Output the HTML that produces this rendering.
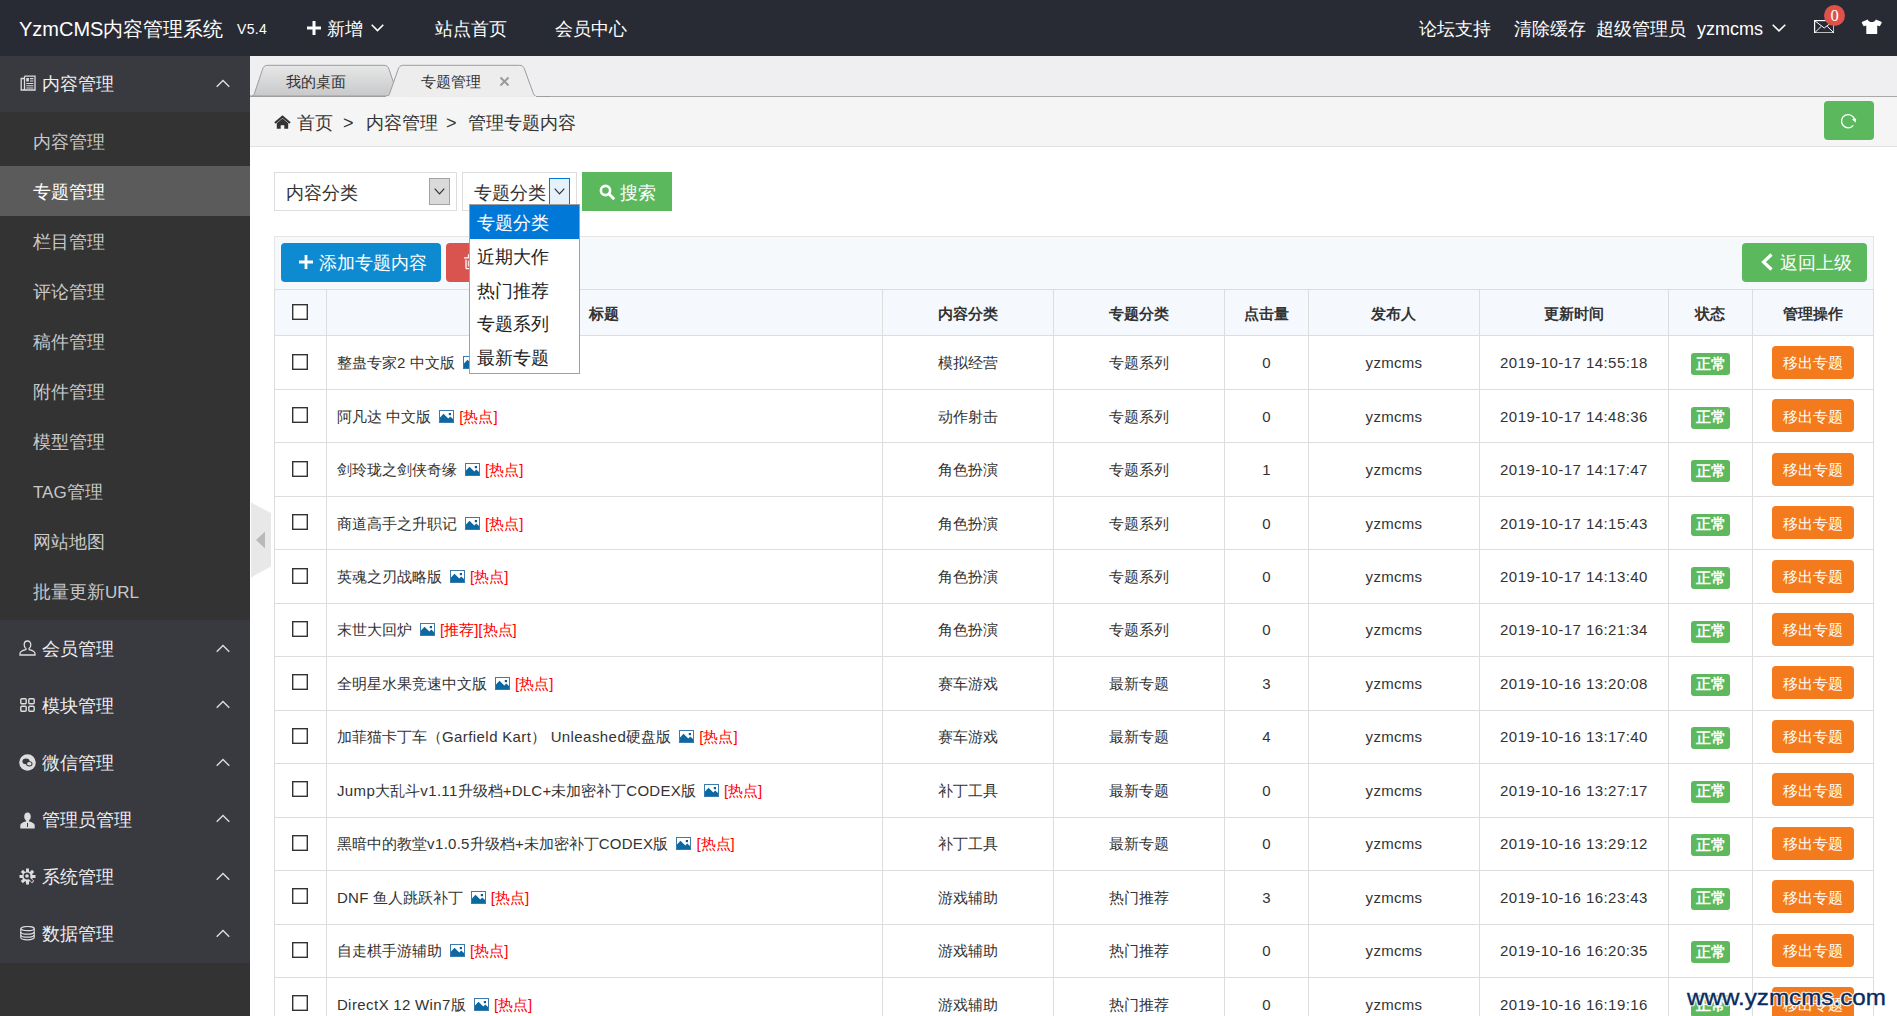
<!DOCTYPE html><html><head><meta charset="utf-8"><style>

*{margin:0;padding:0;box-sizing:border-box}
html,body{width:1897px;height:1016px;overflow:hidden;background:#fff;font-family:"Liberation Sans",sans-serif;color:#333}
.abs{position:absolute}
.t{position:absolute;white-space:nowrap}
.cell{position:absolute;text-align:center;white-space:nowrap}
.vl{position:absolute;width:1px;background:#ddd}
.hl{position:absolute;height:1px;background:#ddd}
.cb{position:absolute;width:16px;height:16px}
.badge{position:absolute;width:39px;height:22px;background:#5eb95e;border-radius:3px}
.obtn{position:absolute;width:82px;height:33px;background:#f37b1d;border-radius:4px}
.red{color:#f00}

</style></head><body>
<div class="abs" style="left:0;top:0;width:1897px;height:56px;background:#292b34"></div>
<div class="t" style="left:19px;top:9.00px;line-height:40px;font-size:20px;color:#fff;">YzmCMS内容管理系统</div>
<div class="t" style="left:237px;top:9.10px;line-height:40px;font-size:14px;color:#fff;letter-spacing:0.3px">V5.4</div>
<svg class="abs" style="left:307px;top:21px" width="14" height="14" viewBox="0 0 14 14"><path d="M5.5 0h3v5.5H14v3H8.5V14h-3V8.5H0v-3h5.5z" fill="#fff"/></svg>
<div class="t" style="left:327px;top:9.00px;line-height:40px;font-size:18px;color:#fff;">新增</div>
<svg class="abs" style="left:371px;top:24px" width="13" height="8" viewBox="0 0 13 8"><path d="M0.7 0.7L6.5 6.5L12.3 0.7" stroke="#fff" stroke-width="1.6" fill="none"/></svg>
<div class="t" style="left:435px;top:9.00px;line-height:40px;font-size:18px;color:#fff;">站点首页</div>
<div class="t" style="left:555px;top:9.00px;line-height:40px;font-size:18px;color:#fff;">会员中心</div>
<div class="t" style="left:1419px;top:9.00px;line-height:40px;font-size:18px;color:#fff;">论坛支持</div>
<div class="t" style="left:1514px;top:9.00px;line-height:40px;font-size:18px;color:#fff;">清除缓存</div>
<div class="t" style="left:1596px;top:9.00px;line-height:40px;font-size:18px;color:#fff;">超级管理员</div>
<div class="t" style="left:1697px;top:8.80px;line-height:40px;font-size:18px;color:#fff;">yzmcms</div>
<svg class="abs" style="left:1772px;top:24px" width="14" height="8" viewBox="0 0 14 8"><path d="M0.7 0.7L7 6.8L13.3 0.7" stroke="#fff" stroke-width="1.6" fill="none"/></svg>
<svg class="abs" style="left:1813.5px;top:19.5px" width="20.5" height="13.5" viewBox="0 0 20.5 13.5"><rect x="0.6" y="0.6" width="19.3" height="12.3" stroke="#fff" stroke-width="1.2" fill="none"/><path d="M0.8 0.8L10.25 8L19.7 0.8M0.8 12.7L7.2 6.4M19.7 12.7L13.3 6.4" stroke="#fff" stroke-width="1" fill="none"/></svg>
<div class="abs" style="left:1824px;top:4.5px;width:21px;height:21px;border-radius:50%;background:#df524a;color:#fff;font-family:'Liberation Serif',serif;font-size:16.5px;text-align:center;line-height:22px">0</div>
<svg class="abs" style="left:1861px;top:18.5px" width="21.5" height="15.5" viewBox="0 0 23 17"><path d="M7 0.5L1.2 3C0.6 3.3 0.4 3.9 0.7 4.5L2.3 7.3C2.6 7.8 3.1 8 3.6 7.8L5.5 7.1V15.8C5.5 16.3 5.9 16.6 6.4 16.6H16.6C17.1 16.6 17.5 16.3 17.5 15.8V7.1L19.4 7.8C19.9 8 20.4 7.8 20.7 7.3L22.3 4.5C22.6 3.9 22.4 3.3 21.8 3L16 0.5C15 2.5 13.5 3.4 11.5 3.4S8 2.5 7 0.5Z" fill="#fff"/></svg>
<div class="abs" style="left:0;top:56px;width:250px;height:960px;background:#333"></div>
<div class="abs" style="left:0;top:56px;width:250px;height:56px;background:#393940"></div>
<div class="t" style="left:42px;top:64.00px;line-height:40px;font-size:18px;color:#eee;">内容管理</div>
<svg class="abs" style="left:20px;top:75px" width="16" height="16" viewBox="0 0 16 16"><path d="M4.5 1.2H15V15H1.2V3.5H4.5" stroke="#ddd" stroke-width="1.3" fill="none"/><path d="M4.5 1.2V15" stroke="#ddd" stroke-width="1.3"/><rect x="6.3" y="3" width="2.6" height="3.5" fill="#ddd"/><path d="M10 3.6h3.4M10 6h3.4M6.3 8.5h7.1M6.3 10.8h7.1M6.3 13h7.1" stroke="#ddd" stroke-width="1.1"/></svg>
<svg class="abs" style="left:215.5px;top:79px" width="14" height="9" viewBox="0 0 14 9"><path d="M0.7 7.8L7 1.5L13.3 7.8" stroke="#ddd" stroke-width="1.4" fill="none"/></svg>
<div class="abs" style="left:0;top:620px;width:250px;height:57px;background:#393940"></div>
<div class="t" style="left:42px;top:628.50px;line-height:40px;font-size:18px;color:#eee;">会员管理</div>
<svg class="abs" style="left:19px;top:640px" width="17" height="16" viewBox="0 0 17 16"><path d="M8.5 1C6.3 1 5.2 2.7 5.2 4.8C5.2 6.5 6 8 7 8.7L6.8 9.6C4 10.3 1 11.8 1 13.5V15H16V13.5C16 11.8 13 10.3 10.2 9.6L10 8.7C11 8 11.8 6.5 11.8 4.8C11.8 2.7 10.7 1 8.5 1Z" stroke="#ddd" stroke-width="1.3" fill="none"/></svg>
<svg class="abs" style="left:215.5px;top:644px" width="14" height="9" viewBox="0 0 14 9"><path d="M0.7 7.8L7 1.5L13.3 7.8" stroke="#ddd" stroke-width="1.4" fill="none"/></svg>
<div class="abs" style="left:0;top:677px;width:250px;height:57px;background:#393940"></div>
<div class="t" style="left:42px;top:685.50px;line-height:40px;font-size:18px;color:#eee;">模块管理</div>
<svg class="abs" style="left:20px;top:698px" width="15" height="14" viewBox="0 0 15 14"><rect x="0.8" y="0.8" width="5.4" height="5" rx="1" stroke="#ddd" stroke-width="1.4" fill="none"/><rect x="8.8" y="0.8" width="5.4" height="5" rx="1" stroke="#ddd" stroke-width="1.4" fill="none"/><rect x="0.8" y="8.2" width="5.4" height="5" rx="1" stroke="#ddd" stroke-width="1.4" fill="none"/><rect x="8.8" y="8.2" width="5.4" height="5" rx="1" stroke="#ddd" stroke-width="1.4" fill="none"/></svg>
<svg class="abs" style="left:215.5px;top:700px" width="14" height="9" viewBox="0 0 14 9"><path d="M0.7 7.8L7 1.5L13.3 7.8" stroke="#ddd" stroke-width="1.4" fill="none"/></svg>
<div class="abs" style="left:0;top:734px;width:250px;height:57px;background:#393940"></div>
<div class="t" style="left:42px;top:742.50px;line-height:40px;font-size:18px;color:#eee;">微信管理</div>
<svg class="abs" style="left:19px;top:754px" width="17" height="17" viewBox="0 0 17 17"><circle cx="8.5" cy="8.5" r="8.3" fill="#ddd"/><ellipse cx="7" cy="7.3" rx="3.6" ry="2.9" fill="#393940"/><ellipse cx="10.3" cy="9.8" rx="3.2" ry="2.6" fill="#393940"/><ellipse cx="10.3" cy="9.8" rx="2.3" ry="1.7" fill="#ddd"/></svg>
<svg class="abs" style="left:215.5px;top:758px" width="14" height="9" viewBox="0 0 14 9"><path d="M0.7 7.8L7 1.5L13.3 7.8" stroke="#ddd" stroke-width="1.4" fill="none"/></svg>
<div class="abs" style="left:0;top:791px;width:250px;height:57px;background:#393940"></div>
<div class="t" style="left:42px;top:799.50px;line-height:40px;font-size:18px;color:#eee;">管理员管理</div>
<svg class="abs" style="left:20px;top:812px" width="15" height="17" viewBox="0 0 15 17"><path d="M7.5 0.5C5.3 0.5 4.2 2.3 4.2 4.6C4.2 6.4 5 7.9 6 8.6L5.8 9.6C3 10.3 0.3 11.5 0.3 13.3V16.5H14.7V13.3C14.7 11.5 12 10.3 9.2 9.6L9 8.6C10 7.9 10.8 6.4 10.8 4.6C10.8 2.3 9.7 0.5 7.5 0.5Z" fill="#ddd"/><path d="M7.5 11v4" stroke="#393940" stroke-width="1"/></svg>
<svg class="abs" style="left:215.5px;top:814px" width="14" height="9" viewBox="0 0 14 9"><path d="M0.7 7.8L7 1.5L13.3 7.8" stroke="#ddd" stroke-width="1.4" fill="none"/></svg>
<div class="abs" style="left:0;top:848px;width:250px;height:57px;background:#393940"></div>
<div class="t" style="left:42px;top:856.50px;line-height:40px;font-size:18px;color:#eee;">系统管理</div>
<svg class="abs" style="left:19px;top:868px" width="17" height="17" viewBox="0 0 17 17"><g fill="#ddd"><circle cx="8.5" cy="8.5" r="5.3"/><rect x="7" y="0.5" width="3" height="16"/><rect x="0.5" y="7" width="16" height="3"/><rect x="7" y="0.5" width="3" height="16" transform="rotate(45 8.5 8.5)"/><rect x="7" y="0.5" width="3" height="16" transform="rotate(-45 8.5 8.5)"/></g><circle cx="8" cy="8" r="2.6" fill="none" stroke="#393940" stroke-width="1.6"/><path d="M10 10l3.5 3.5" stroke="#393940" stroke-width="1.8"/></svg>
<svg class="abs" style="left:215.5px;top:872px" width="14" height="9" viewBox="0 0 14 9"><path d="M0.7 7.8L7 1.5L13.3 7.8" stroke="#ddd" stroke-width="1.4" fill="none"/></svg>
<div class="abs" style="left:0;top:905px;width:250px;height:58px;background:#393940"></div>
<div class="t" style="left:42px;top:914.00px;line-height:40px;font-size:18px;color:#eee;">数据管理</div>
<svg class="abs" style="left:20px;top:926px" width="15" height="14.5" viewBox="0 0 15 14.5"><g stroke="#ddd" stroke-width="1.2" fill="none"><ellipse cx="7.5" cy="2.6" rx="6.7" ry="2.1"/><path d="M0.8 2.6V11.6C0.8 12.8 3.8 13.8 7.5 13.8S14.2 12.8 14.2 11.6V2.6"/><path d="M0.8 5.9C0.8 7.1 3.8 8.1 7.5 8.1S14.2 7.1 14.2 5.9M0.8 8.9C0.8 10.1 3.8 11.1 7.5 11.1S14.2 10.1 14.2 8.9"/></g></svg>
<svg class="abs" style="left:215.5px;top:929px" width="14" height="9" viewBox="0 0 14 9"><path d="M0.7 7.8L7 1.5L13.3 7.8" stroke="#ddd" stroke-width="1.4" fill="none"/></svg>
<div class="abs" style="left:0;top:166px;width:250px;height:50px;background:#5b5b5b"></div>
<div class="t" style="left:33px;top:121.50px;line-height:40px;font-size:18px;color:#c8c8c8;">内容管理</div>
<div class="t" style="left:33px;top:171.50px;line-height:40px;font-size:18px;color:#fff;">专题管理</div>
<div class="t" style="left:33px;top:221.50px;line-height:40px;font-size:18px;color:#c8c8c8;">栏目管理</div>
<div class="t" style="left:33px;top:271.50px;line-height:40px;font-size:18px;color:#c8c8c8;">评论管理</div>
<div class="t" style="left:33px;top:321.50px;line-height:40px;font-size:18px;color:#c8c8c8;">稿件管理</div>
<div class="t" style="left:33px;top:371.50px;line-height:40px;font-size:18px;color:#c8c8c8;">附件管理</div>
<div class="t" style="left:33px;top:421.50px;line-height:40px;font-size:18px;color:#c8c8c8;">模型管理</div>
<div class="t" style="left:33px;top:471.50px;line-height:40px;font-size:18px;color:#c8c8c8;"><span style="font-size:17px">TAG</span>管理</div>
<div class="t" style="left:33px;top:521.50px;line-height:40px;font-size:18px;color:#c8c8c8;">网站地图</div>
<div class="t" style="left:33px;top:571.50px;line-height:40px;font-size:18px;color:#c8c8c8;">批量更新<span style="font-size:17px">URL</span></div>
<svg class="abs" style="left:251px;top:502px" width="21" height="76" viewBox="0 0 21 76"><path d="M0 0.5L20 11V64.5L0 75.5Z" fill="#e8e8e8"/><path d="M5 38L14 29.5V46.5Z" fill="#b9b9b9"/></svg>
<div class="abs" style="left:250px;top:56px;width:1647px;height:41px;background:#efeff1;border-bottom:1px solid #a9a9a9"></div>
<svg class="abs" style="left:250px;top:56px" width="300" height="42" viewBox="0 0 300 42">
<defs><linearGradient id="g1" x1="0" y1="0" x2="0" y2="1"><stop offset="0" stop-color="#e6e7e7"/><stop offset="1" stop-color="#c8c8ca"/></linearGradient></defs>
<path d="M0 40.5C2.5 40.5 3.6 39.6 4.4 37.5L12.6 13.2C13.4 10.6 14.9 9.3 17.6 9.3H134C136.7 9.3 138.2 10.6 139 13.2L147.2 37.5C148 39.6 149 40.5 151.5 40.5Z" fill="url(#g1)" stroke="#9c9c9c" stroke-width="1"/>
<path d="M0 40.5H140" stroke="#9f9f9f" stroke-width="2"/>
<path d="M134.5 41C137.5 41 138.8 39.8 139.6 37.6L148.2 13.2C149 10.6 150.5 9.3 153.2 9.3H269.5C272.2 9.3 273.7 10.6 274.5 13.2L283.4 37.6C284.3 39.8 285.5 40.6 288 40.6H300" fill="#ededed" stroke="#9c9c9c" stroke-width="1"/>
<rect x="136" y="40.1" width="150" height="1.9" fill="#ededed"/>
</svg>
<div class="t" style="left:286px;top:61.90px;line-height:40px;font-size:15px;color:#333;">我的桌面</div>
<div class="t" style="left:421px;top:61.90px;line-height:40px;font-size:15px;color:#333;">专题管理</div>
<svg class="abs" style="left:499px;top:76px" width="11" height="11" viewBox="0 0 11 11"><path d="M1.5 1.5L9.5 9.5M9.5 1.5L1.5 9.5" stroke="#9a9a9a" stroke-width="2"/></svg>
<div class="abs" style="left:250px;top:97px;width:1647px;height:50px;background:#f5f5f5;border-bottom:1px solid #e2e2e2"></div>
<svg class="abs" style="left:274px;top:115px" width="17" height="14" viewBox="0 0 17 14"><path d="M8.5 0.3L0.3 7.2L1.7 8.8L8.5 3L15.3 8.8L16.7 7.2Z" fill="#333"/><path d="M2.8 8.3L8.5 3.6L14.2 8.3V13.8H10.3V10.2H6.7V13.8H2.8Z" fill="#333"/></svg>
<div class="t" style="left:297px;top:102.50px;line-height:40px;font-size:18px;color:#333;">首页</div>
<div class="t" style="left:343px;top:102.50px;line-height:40px;font-size:18px;color:#333;">&gt;</div>
<div class="t" style="left:366px;top:102.50px;line-height:40px;font-size:18px;color:#333;">内容管理</div>
<div class="t" style="left:446px;top:102.50px;line-height:40px;font-size:18px;color:#333;">&gt;</div>
<div class="t" style="left:468px;top:102.50px;line-height:40px;font-size:18px;color:#333;">管理专题内容</div>
<div class="abs" style="left:1824px;top:101px;width:50px;height:39px;background:#5cb85c;border-radius:4px"></div>
<svg class="abs" style="left:1840px;top:113px" width="18" height="17" viewBox="0 0 18 17"><path d="M13.3 12.3A6.6 6.6 0 1 1 14.6 6.8" stroke="#fff" stroke-width="1.3" fill="none"/><path d="M12 6.2L16.2 5.6L15.6 9.8Z" fill="#fff"/></svg>
<div class="abs" style="left:274px;top:172px;width:183px;height:39px;border:1px solid #ddd;background:#fff"></div>
<div class="t" style="left:286px;top:173.00px;line-height:40px;font-size:18px;color:#333;">内容分类</div>
<div class="abs" style="left:429px;top:178px;width:21px;height:27px;border:1px solid #a3a3a3;background:#dadada"></div>
<svg class="abs" style="left:434px;top:188px" width="11" height="7" viewBox="0 0 11 7"><path d="M0.7 0.7L5.5 5.8L10.3 0.7" stroke="#333" stroke-width="1.2" fill="none"/></svg>
<div class="abs" style="left:462px;top:172px;width:115px;height:39px;border:1px solid #ddd;background:#fff"></div>
<div class="t" style="left:474px;top:173.00px;line-height:40px;font-size:18px;color:#333;">专题分类</div>
<div class="abs" style="left:549px;top:178px;width:21px;height:27px;border:1px solid #0078d7;background:#e5f1fb"></div>
<svg class="abs" style="left:554px;top:188px" width="11" height="7" viewBox="0 0 11 7"><path d="M0.7 0.7L5.5 5.8L10.3 0.7" stroke="#333" stroke-width="1.2" fill="none"/></svg>
<div class="abs" style="left:582px;top:172px;width:90px;height:39px;background:#5cb85c"></div>
<svg class="abs" style="left:599px;top:184px" width="16" height="16" viewBox="0 0 16 16"><circle cx="6.5" cy="6.5" r="4.6" stroke="#fff" stroke-width="2.6" fill="none"/><path d="M10 10L14.3 14.3" stroke="#fff" stroke-width="3" stroke-linecap="round"/></svg>
<div class="t" style="left:620px;top:173.00px;line-height:40px;font-size:18px;color:#fff;">搜索</div>
<div class="abs" style="left:274px;top:236px;width:1600px;height:54px;background:#f5f9fc;border:1px solid #e6e6e6;border-bottom:none"></div>
<div class="abs" style="left:281px;top:243px;width:160px;height:39px;background:#0e8bd0;border-radius:4px"></div>
<svg class="abs" style="left:299px;top:255px" width="14" height="14" viewBox="0 0 14 14"><path d="M5.6 0h2.8v5.6H14v2.8H8.4V14H5.6V8.4H0V5.6h5.6z" fill="#fff"/></svg>
<div class="t" style="left:319px;top:242.50px;line-height:40px;font-size:18px;color:#fff;">添加专题内容</div>
<div class="abs" style="left:446px;top:243px;width:110px;height:39px;background:#d9534f;border-radius:4px"></div>
<svg class="abs" style="left:463px;top:253px" width="12" height="17" viewBox="0 0 12 17"><path d="M1 4.8H12M5.5 4.8V2H9V4.8" stroke="#fff" stroke-width="1.3" fill="none"/><path d="M3 6.5V14.5C3 15.2 3.5 15.7 4.2 15.7H10" stroke="#fff" stroke-width="1.3" fill="none"/><path d="M5.3 7.5V13.5" stroke="#fff" stroke-width="1"/></svg>
<div class="abs" style="left:1742px;top:243px;width:125px;height:39px;background:#5cb85c;border-radius:4px"></div>
<svg class="abs" style="left:1760px;top:253px" width="14" height="18" viewBox="0 0 14 18"><path d="M11.5 1.5L3.5 9L11.5 16.5" stroke="#fff" stroke-width="3.2" fill="none"/></svg>
<div class="t" style="left:1780px;top:242.50px;line-height:40px;font-size:18px;color:#fff;">返回上级</div>
<div class="abs" style="left:274px;top:289px;width:1600px;height:47px;background:#f5f9fd"></div>
<div class="hl" style="left:274px;top:289px;width:1600px"></div>
<div class="hl" style="left:274px;top:335px;width:1600px"></div>
<div class="hl" style="left:274px;top:389px;width:1600px"></div>
<div class="hl" style="left:274px;top:442px;width:1600px"></div>
<div class="hl" style="left:274px;top:496px;width:1600px"></div>
<div class="hl" style="left:274px;top:549px;width:1600px"></div>
<div class="hl" style="left:274px;top:603px;width:1600px"></div>
<div class="hl" style="left:274px;top:656px;width:1600px"></div>
<div class="hl" style="left:274px;top:710px;width:1600px"></div>
<div class="hl" style="left:274px;top:763px;width:1600px"></div>
<div class="hl" style="left:274px;top:817px;width:1600px"></div>
<div class="hl" style="left:274px;top:870px;width:1600px"></div>
<div class="hl" style="left:274px;top:924px;width:1600px"></div>
<div class="hl" style="left:274px;top:977px;width:1600px"></div>
<div class="hl" style="left:274px;top:1030px;width:1600px"></div>
<div class="vl" style="left:274px;top:289px;height:740px"></div>
<div class="vl" style="left:326px;top:289px;height:740px"></div>
<div class="vl" style="left:882px;top:289px;height:740px"></div>
<div class="vl" style="left:1053px;top:289px;height:740px"></div>
<div class="vl" style="left:1224px;top:289px;height:740px"></div>
<div class="vl" style="left:1308px;top:289px;height:740px"></div>
<div class="vl" style="left:1479px;top:289px;height:740px"></div>
<div class="vl" style="left:1668px;top:289px;height:740px"></div>
<div class="vl" style="left:1752px;top:289px;height:740px"></div>
<div class="vl" style="left:1873px;top:289px;height:740px"></div>
<svg class="cb" style="left:292px;top:304px" width="16" height="16" viewBox="0 0 16 16"><rect x="0.7" y="0.7" width="14.6" height="14.6" fill="#fff" stroke="#333" stroke-width="1.4"/></svg>
<div class="cell" style="left:326.4px;width:555.90px;top:293.90px;line-height:40px;font-size:15px;color:#333;font-weight:bold">标题</div>
<div class="cell" style="left:882.3px;width:171.00px;top:293.90px;line-height:40px;font-size:15px;color:#333;font-weight:bold">内容分类</div>
<div class="cell" style="left:1053.3px;width:170.90px;top:293.90px;line-height:40px;font-size:15px;color:#333;font-weight:bold">专题分类</div>
<div class="cell" style="left:1224.2px;width:84.40px;top:293.90px;line-height:40px;font-size:15px;color:#333;font-weight:bold">点击量</div>
<div class="cell" style="left:1308.6px;width:170.80px;top:293.90px;line-height:40px;font-size:15px;color:#333;font-weight:bold">发布人</div>
<div class="cell" style="left:1479.4px;width:189.20px;top:293.90px;line-height:40px;font-size:15px;color:#333;font-weight:bold">更新时间</div>
<div class="cell" style="left:1668.6px;width:83.80px;top:293.90px;line-height:40px;font-size:15px;color:#333;font-weight:bold">状态</div>
<div class="cell" style="left:1752.4px;width:120.60px;top:293.90px;line-height:40px;font-size:15px;color:#333;font-weight:bold">管理操作</div>
<svg class="cb" style="left:292px;top:354px" width="16" height="16" viewBox="0 0 16 16"><rect x="0.7" y="0.7" width="14.6" height="14.6" fill="#fff" stroke="#333" stroke-width="1.4"/></svg>
<div class="t" style="left:337px;top:343.23px;line-height:40px;font-size:15px;color:#333;">整蛊专家<span style="letter-spacing:0.45px">2</span><span style="letter-spacing:0.1px"> </span>中文版<svg width="15" height="13" viewBox="0 0 15 13" style="vertical-align:-1px;margin:0 5px 0 8px"><rect x="0.5" y="0.5" width="14" height="12" fill="#fff" stroke="#3c7bab" stroke-width="1"/><path d="M1 7.5L4.5 3.8L9.3 8.6L11.2 6.6L14 9V12H1Z" fill="#0b69a1"/><rect x="9.8" y="3" width="2.2" height="2.2" fill="#0b5a95"/></svg><span class="red">[热点]</span></div>
<div class="cell" style="left:882.3px;width:171.00px;top:343.23px;line-height:40px;font-size:15px;color:#333;">模拟经营</div>
<div class="cell" style="left:1053.3px;width:170.90px;top:343.23px;line-height:40px;font-size:15px;color:#333;">专题系列</div>
<div class="cell" style="left:1224.2px;width:84.40px;top:343.23px;line-height:40px;font-size:15px;color:#333;">0</div>
<div class="cell" style="left:1308.6px;width:170.80px;top:343.23px;line-height:40px;font-size:15px;color:#333;letter-spacing:0.3px">yzmcms</div>
<div class="cell" style="left:1479.4px;width:189.20px;top:343.23px;line-height:40px;font-size:15px;color:#333;letter-spacing:0.45px">2019-10-17 14:55:18</div>
<div class="badge" style="left:1691px;top:353.2px"></div>
<div class="cell" style="left:1691px;width:39.00px;top:343.73px;line-height:40px;font-size:15px;color:#fff;font-weight:bold">正常</div>
<div class="obtn" style="left:1772px;top:345.7px"></div>
<div class="cell" style="left:1772px;width:82.00px;top:343.23px;line-height:40px;font-size:15px;color:#fff;">移出专题</div>
<svg class="cb" style="left:292px;top:407px" width="16" height="16" viewBox="0 0 16 16"><rect x="0.7" y="0.7" width="14.6" height="14.6" fill="#fff" stroke="#333" stroke-width="1.4"/></svg>
<div class="t" style="left:337px;top:396.68px;line-height:40px;font-size:15px;color:#333;">阿凡达<span style="letter-spacing:0.1px"> </span>中文版<svg width="15" height="13" viewBox="0 0 15 13" style="vertical-align:-1px;margin:0 5px 0 8px"><rect x="0.5" y="0.5" width="14" height="12" fill="#fff" stroke="#3c7bab" stroke-width="1"/><path d="M1 7.5L4.5 3.8L9.3 8.6L11.2 6.6L14 9V12H1Z" fill="#0b69a1"/><rect x="9.8" y="3" width="2.2" height="2.2" fill="#0b5a95"/></svg><span class="red">[热点]</span></div>
<div class="cell" style="left:882.3px;width:171.00px;top:396.68px;line-height:40px;font-size:15px;color:#333;">动作射击</div>
<div class="cell" style="left:1053.3px;width:170.90px;top:396.68px;line-height:40px;font-size:15px;color:#333;">专题系列</div>
<div class="cell" style="left:1224.2px;width:84.40px;top:396.68px;line-height:40px;font-size:15px;color:#333;">0</div>
<div class="cell" style="left:1308.6px;width:170.80px;top:396.68px;line-height:40px;font-size:15px;color:#333;letter-spacing:0.3px">yzmcms</div>
<div class="cell" style="left:1479.4px;width:189.20px;top:396.68px;line-height:40px;font-size:15px;color:#333;letter-spacing:0.45px">2019-10-17 14:48:36</div>
<div class="badge" style="left:1691px;top:406.7px"></div>
<div class="cell" style="left:1691px;width:39.00px;top:397.18px;line-height:40px;font-size:15px;color:#fff;font-weight:bold">正常</div>
<div class="obtn" style="left:1772px;top:399.2px"></div>
<div class="cell" style="left:1772px;width:82.00px;top:396.68px;line-height:40px;font-size:15px;color:#fff;">移出专题</div>
<svg class="cb" style="left:292px;top:461px" width="16" height="16" viewBox="0 0 16 16"><rect x="0.7" y="0.7" width="14.6" height="14.6" fill="#fff" stroke="#333" stroke-width="1.4"/></svg>
<div class="t" style="left:337px;top:450.12px;line-height:40px;font-size:15px;color:#333;">剑玲珑之剑侠奇缘<svg width="15" height="13" viewBox="0 0 15 13" style="vertical-align:-1px;margin:0 5px 0 8px"><rect x="0.5" y="0.5" width="14" height="12" fill="#fff" stroke="#3c7bab" stroke-width="1"/><path d="M1 7.5L4.5 3.8L9.3 8.6L11.2 6.6L14 9V12H1Z" fill="#0b69a1"/><rect x="9.8" y="3" width="2.2" height="2.2" fill="#0b5a95"/></svg><span class="red">[热点]</span></div>
<div class="cell" style="left:882.3px;width:171.00px;top:450.12px;line-height:40px;font-size:15px;color:#333;">角色扮演</div>
<div class="cell" style="left:1053.3px;width:170.90px;top:450.12px;line-height:40px;font-size:15px;color:#333;">专题系列</div>
<div class="cell" style="left:1224.2px;width:84.40px;top:450.12px;line-height:40px;font-size:15px;color:#333;">1</div>
<div class="cell" style="left:1308.6px;width:170.80px;top:450.12px;line-height:40px;font-size:15px;color:#333;letter-spacing:0.3px">yzmcms</div>
<div class="cell" style="left:1479.4px;width:189.20px;top:450.12px;line-height:40px;font-size:15px;color:#333;letter-spacing:0.45px">2019-10-17 14:17:47</div>
<div class="badge" style="left:1691px;top:460.1px"></div>
<div class="cell" style="left:1691px;width:39.00px;top:450.62px;line-height:40px;font-size:15px;color:#fff;font-weight:bold">正常</div>
<div class="obtn" style="left:1772px;top:452.6px"></div>
<div class="cell" style="left:1772px;width:82.00px;top:450.12px;line-height:40px;font-size:15px;color:#fff;">移出专题</div>
<svg class="cb" style="left:292px;top:514px" width="16" height="16" viewBox="0 0 16 16"><rect x="0.7" y="0.7" width="14.6" height="14.6" fill="#fff" stroke="#333" stroke-width="1.4"/></svg>
<div class="t" style="left:337px;top:503.58px;line-height:40px;font-size:15px;color:#333;">商道高手之升职记<svg width="15" height="13" viewBox="0 0 15 13" style="vertical-align:-1px;margin:0 5px 0 8px"><rect x="0.5" y="0.5" width="14" height="12" fill="#fff" stroke="#3c7bab" stroke-width="1"/><path d="M1 7.5L4.5 3.8L9.3 8.6L11.2 6.6L14 9V12H1Z" fill="#0b69a1"/><rect x="9.8" y="3" width="2.2" height="2.2" fill="#0b5a95"/></svg><span class="red">[热点]</span></div>
<div class="cell" style="left:882.3px;width:171.00px;top:503.58px;line-height:40px;font-size:15px;color:#333;">角色扮演</div>
<div class="cell" style="left:1053.3px;width:170.90px;top:503.58px;line-height:40px;font-size:15px;color:#333;">专题系列</div>
<div class="cell" style="left:1224.2px;width:84.40px;top:503.58px;line-height:40px;font-size:15px;color:#333;">0</div>
<div class="cell" style="left:1308.6px;width:170.80px;top:503.58px;line-height:40px;font-size:15px;color:#333;letter-spacing:0.3px">yzmcms</div>
<div class="cell" style="left:1479.4px;width:189.20px;top:503.58px;line-height:40px;font-size:15px;color:#333;letter-spacing:0.45px">2019-10-17 14:15:43</div>
<div class="badge" style="left:1691px;top:513.6px"></div>
<div class="cell" style="left:1691px;width:39.00px;top:504.08px;line-height:40px;font-size:15px;color:#fff;font-weight:bold">正常</div>
<div class="obtn" style="left:1772px;top:506.1px"></div>
<div class="cell" style="left:1772px;width:82.00px;top:503.58px;line-height:40px;font-size:15px;color:#fff;">移出专题</div>
<svg class="cb" style="left:292px;top:568px" width="16" height="16" viewBox="0 0 16 16"><rect x="0.7" y="0.7" width="14.6" height="14.6" fill="#fff" stroke="#333" stroke-width="1.4"/></svg>
<div class="t" style="left:337px;top:557.02px;line-height:40px;font-size:15px;color:#333;">英魂之刃战略版<svg width="15" height="13" viewBox="0 0 15 13" style="vertical-align:-1px;margin:0 5px 0 8px"><rect x="0.5" y="0.5" width="14" height="12" fill="#fff" stroke="#3c7bab" stroke-width="1"/><path d="M1 7.5L4.5 3.8L9.3 8.6L11.2 6.6L14 9V12H1Z" fill="#0b69a1"/><rect x="9.8" y="3" width="2.2" height="2.2" fill="#0b5a95"/></svg><span class="red">[热点]</span></div>
<div class="cell" style="left:882.3px;width:171.00px;top:557.02px;line-height:40px;font-size:15px;color:#333;">角色扮演</div>
<div class="cell" style="left:1053.3px;width:170.90px;top:557.02px;line-height:40px;font-size:15px;color:#333;">专题系列</div>
<div class="cell" style="left:1224.2px;width:84.40px;top:557.02px;line-height:40px;font-size:15px;color:#333;">0</div>
<div class="cell" style="left:1308.6px;width:170.80px;top:557.02px;line-height:40px;font-size:15px;color:#333;letter-spacing:0.3px">yzmcms</div>
<div class="cell" style="left:1479.4px;width:189.20px;top:557.02px;line-height:40px;font-size:15px;color:#333;letter-spacing:0.45px">2019-10-17 14:13:40</div>
<div class="badge" style="left:1691px;top:567.0px"></div>
<div class="cell" style="left:1691px;width:39.00px;top:557.52px;line-height:40px;font-size:15px;color:#fff;font-weight:bold">正常</div>
<div class="obtn" style="left:1772px;top:559.5px"></div>
<div class="cell" style="left:1772px;width:82.00px;top:557.02px;line-height:40px;font-size:15px;color:#fff;">移出专题</div>
<svg class="cb" style="left:292px;top:621px" width="16" height="16" viewBox="0 0 16 16"><rect x="0.7" y="0.7" width="14.6" height="14.6" fill="#fff" stroke="#333" stroke-width="1.4"/></svg>
<div class="t" style="left:337px;top:610.48px;line-height:40px;font-size:15px;color:#333;">末世大回炉<svg width="15" height="13" viewBox="0 0 15 13" style="vertical-align:-1px;margin:0 5px 0 8px"><rect x="0.5" y="0.5" width="14" height="12" fill="#fff" stroke="#3c7bab" stroke-width="1"/><path d="M1 7.5L4.5 3.8L9.3 8.6L11.2 6.6L14 9V12H1Z" fill="#0b69a1"/><rect x="9.8" y="3" width="2.2" height="2.2" fill="#0b5a95"/></svg><span class="red">[推荐][热点]</span></div>
<div class="cell" style="left:882.3px;width:171.00px;top:610.48px;line-height:40px;font-size:15px;color:#333;">角色扮演</div>
<div class="cell" style="left:1053.3px;width:170.90px;top:610.48px;line-height:40px;font-size:15px;color:#333;">专题系列</div>
<div class="cell" style="left:1224.2px;width:84.40px;top:610.48px;line-height:40px;font-size:15px;color:#333;">0</div>
<div class="cell" style="left:1308.6px;width:170.80px;top:610.48px;line-height:40px;font-size:15px;color:#333;letter-spacing:0.3px">yzmcms</div>
<div class="cell" style="left:1479.4px;width:189.20px;top:610.48px;line-height:40px;font-size:15px;color:#333;letter-spacing:0.45px">2019-10-17 16:21:34</div>
<div class="badge" style="left:1691px;top:620.5px"></div>
<div class="cell" style="left:1691px;width:39.00px;top:610.98px;line-height:40px;font-size:15px;color:#fff;font-weight:bold">正常</div>
<div class="obtn" style="left:1772px;top:613.0px"></div>
<div class="cell" style="left:1772px;width:82.00px;top:610.48px;line-height:40px;font-size:15px;color:#fff;">移出专题</div>
<svg class="cb" style="left:292px;top:674px" width="16" height="16" viewBox="0 0 16 16"><rect x="0.7" y="0.7" width="14.6" height="14.6" fill="#fff" stroke="#333" stroke-width="1.4"/></svg>
<div class="t" style="left:337px;top:663.93px;line-height:40px;font-size:15px;color:#333;">全明星水果竞速中文版<svg width="15" height="13" viewBox="0 0 15 13" style="vertical-align:-1px;margin:0 5px 0 8px"><rect x="0.5" y="0.5" width="14" height="12" fill="#fff" stroke="#3c7bab" stroke-width="1"/><path d="M1 7.5L4.5 3.8L9.3 8.6L11.2 6.6L14 9V12H1Z" fill="#0b69a1"/><rect x="9.8" y="3" width="2.2" height="2.2" fill="#0b5a95"/></svg><span class="red">[热点]</span></div>
<div class="cell" style="left:882.3px;width:171.00px;top:663.93px;line-height:40px;font-size:15px;color:#333;">赛车游戏</div>
<div class="cell" style="left:1053.3px;width:170.90px;top:663.93px;line-height:40px;font-size:15px;color:#333;">最新专题</div>
<div class="cell" style="left:1224.2px;width:84.40px;top:663.93px;line-height:40px;font-size:15px;color:#333;">3</div>
<div class="cell" style="left:1308.6px;width:170.80px;top:663.93px;line-height:40px;font-size:15px;color:#333;letter-spacing:0.3px">yzmcms</div>
<div class="cell" style="left:1479.4px;width:189.20px;top:663.93px;line-height:40px;font-size:15px;color:#333;letter-spacing:0.45px">2019-10-16 13:20:08</div>
<div class="badge" style="left:1691px;top:673.9px"></div>
<div class="cell" style="left:1691px;width:39.00px;top:664.43px;line-height:40px;font-size:15px;color:#fff;font-weight:bold">正常</div>
<div class="obtn" style="left:1772px;top:666.4px"></div>
<div class="cell" style="left:1772px;width:82.00px;top:663.93px;line-height:40px;font-size:15px;color:#fff;">移出专题</div>
<svg class="cb" style="left:292px;top:728px" width="16" height="16" viewBox="0 0 16 16"><rect x="0.7" y="0.7" width="14.6" height="14.6" fill="#fff" stroke="#333" stroke-width="1.4"/></svg>
<div class="t" style="left:337px;top:717.38px;line-height:40px;font-size:15px;color:#333;">加菲猫卡丁车（<span style="letter-spacing:0.25px">G</span><span style="letter-spacing:0.45px">arfield</span><span style="letter-spacing:0.1px"> </span><span style="letter-spacing:0.25px">K</span><span style="letter-spacing:0.45px">art</span>）<span style="letter-spacing:0.1px"> </span><span style="letter-spacing:0.25px">U</span><span style="letter-spacing:0.45px">nleashed</span>硬盘版<svg width="15" height="13" viewBox="0 0 15 13" style="vertical-align:-1px;margin:0 5px 0 8px"><rect x="0.5" y="0.5" width="14" height="12" fill="#fff" stroke="#3c7bab" stroke-width="1"/><path d="M1 7.5L4.5 3.8L9.3 8.6L11.2 6.6L14 9V12H1Z" fill="#0b69a1"/><rect x="9.8" y="3" width="2.2" height="2.2" fill="#0b5a95"/></svg><span class="red">[热点]</span></div>
<div class="cell" style="left:882.3px;width:171.00px;top:717.38px;line-height:40px;font-size:15px;color:#333;">赛车游戏</div>
<div class="cell" style="left:1053.3px;width:170.90px;top:717.38px;line-height:40px;font-size:15px;color:#333;">最新专题</div>
<div class="cell" style="left:1224.2px;width:84.40px;top:717.38px;line-height:40px;font-size:15px;color:#333;">4</div>
<div class="cell" style="left:1308.6px;width:170.80px;top:717.38px;line-height:40px;font-size:15px;color:#333;letter-spacing:0.3px">yzmcms</div>
<div class="cell" style="left:1479.4px;width:189.20px;top:717.38px;line-height:40px;font-size:15px;color:#333;letter-spacing:0.45px">2019-10-16 13:17:40</div>
<div class="badge" style="left:1691px;top:727.4px"></div>
<div class="cell" style="left:1691px;width:39.00px;top:717.88px;line-height:40px;font-size:15px;color:#fff;font-weight:bold">正常</div>
<div class="obtn" style="left:1772px;top:719.9px"></div>
<div class="cell" style="left:1772px;width:82.00px;top:717.38px;line-height:40px;font-size:15px;color:#fff;">移出专题</div>
<svg class="cb" style="left:292px;top:781px" width="16" height="16" viewBox="0 0 16 16"><rect x="0.7" y="0.7" width="14.6" height="14.6" fill="#fff" stroke="#333" stroke-width="1.4"/></svg>
<div class="t" style="left:337px;top:770.83px;line-height:40px;font-size:15px;color:#333;"><span style="letter-spacing:0.25px">J</span><span style="letter-spacing:0.45px">ump</span>大乱斗<span style="letter-spacing:0.45px">v1</span><span style="letter-spacing:0.1px">.</span><span style="letter-spacing:0.45px">11</span>升级档<span style="letter-spacing:0.1px">+</span><span style="letter-spacing:0.25px">DLC</span><span style="letter-spacing:0.1px">+</span>未加密补丁<span style="letter-spacing:0.25px">CODEX</span>版<svg width="15" height="13" viewBox="0 0 15 13" style="vertical-align:-1px;margin:0 5px 0 8px"><rect x="0.5" y="0.5" width="14" height="12" fill="#fff" stroke="#3c7bab" stroke-width="1"/><path d="M1 7.5L4.5 3.8L9.3 8.6L11.2 6.6L14 9V12H1Z" fill="#0b69a1"/><rect x="9.8" y="3" width="2.2" height="2.2" fill="#0b5a95"/></svg><span class="red">[热点]</span></div>
<div class="cell" style="left:882.3px;width:171.00px;top:770.83px;line-height:40px;font-size:15px;color:#333;">补丁工具</div>
<div class="cell" style="left:1053.3px;width:170.90px;top:770.83px;line-height:40px;font-size:15px;color:#333;">最新专题</div>
<div class="cell" style="left:1224.2px;width:84.40px;top:770.83px;line-height:40px;font-size:15px;color:#333;">0</div>
<div class="cell" style="left:1308.6px;width:170.80px;top:770.83px;line-height:40px;font-size:15px;color:#333;letter-spacing:0.3px">yzmcms</div>
<div class="cell" style="left:1479.4px;width:189.20px;top:770.83px;line-height:40px;font-size:15px;color:#333;letter-spacing:0.45px">2019-10-16 13:27:17</div>
<div class="badge" style="left:1691px;top:780.8px"></div>
<div class="cell" style="left:1691px;width:39.00px;top:771.33px;line-height:40px;font-size:15px;color:#fff;font-weight:bold">正常</div>
<div class="obtn" style="left:1772px;top:773.3px"></div>
<div class="cell" style="left:1772px;width:82.00px;top:770.83px;line-height:40px;font-size:15px;color:#fff;">移出专题</div>
<svg class="cb" style="left:292px;top:835px" width="16" height="16" viewBox="0 0 16 16"><rect x="0.7" y="0.7" width="14.6" height="14.6" fill="#fff" stroke="#333" stroke-width="1.4"/></svg>
<div class="t" style="left:337px;top:824.27px;line-height:40px;font-size:15px;color:#333;">黑暗中的教堂<span style="letter-spacing:0.45px">v1</span><span style="letter-spacing:0.1px">.</span><span style="letter-spacing:0.45px">0</span><span style="letter-spacing:0.1px">.</span><span style="letter-spacing:0.45px">5</span>升级档<span style="letter-spacing:0.1px">+</span>未加密补丁<span style="letter-spacing:0.25px">CODEX</span>版<svg width="15" height="13" viewBox="0 0 15 13" style="vertical-align:-1px;margin:0 5px 0 8px"><rect x="0.5" y="0.5" width="14" height="12" fill="#fff" stroke="#3c7bab" stroke-width="1"/><path d="M1 7.5L4.5 3.8L9.3 8.6L11.2 6.6L14 9V12H1Z" fill="#0b69a1"/><rect x="9.8" y="3" width="2.2" height="2.2" fill="#0b5a95"/></svg><span class="red">[热点]</span></div>
<div class="cell" style="left:882.3px;width:171.00px;top:824.27px;line-height:40px;font-size:15px;color:#333;">补丁工具</div>
<div class="cell" style="left:1053.3px;width:170.90px;top:824.27px;line-height:40px;font-size:15px;color:#333;">最新专题</div>
<div class="cell" style="left:1224.2px;width:84.40px;top:824.27px;line-height:40px;font-size:15px;color:#333;">0</div>
<div class="cell" style="left:1308.6px;width:170.80px;top:824.27px;line-height:40px;font-size:15px;color:#333;letter-spacing:0.3px">yzmcms</div>
<div class="cell" style="left:1479.4px;width:189.20px;top:824.27px;line-height:40px;font-size:15px;color:#333;letter-spacing:0.45px">2019-10-16 13:29:12</div>
<div class="badge" style="left:1691px;top:834.3px"></div>
<div class="cell" style="left:1691px;width:39.00px;top:824.77px;line-height:40px;font-size:15px;color:#fff;font-weight:bold">正常</div>
<div class="obtn" style="left:1772px;top:826.8px"></div>
<div class="cell" style="left:1772px;width:82.00px;top:824.27px;line-height:40px;font-size:15px;color:#fff;">移出专题</div>
<svg class="cb" style="left:292px;top:888px" width="16" height="16" viewBox="0 0 16 16"><rect x="0.7" y="0.7" width="14.6" height="14.6" fill="#fff" stroke="#333" stroke-width="1.4"/></svg>
<div class="t" style="left:337px;top:877.73px;line-height:40px;font-size:15px;color:#333;"><span style="letter-spacing:0.25px">DNF</span><span style="letter-spacing:0.1px"> </span>鱼人跳跃补丁<svg width="15" height="13" viewBox="0 0 15 13" style="vertical-align:-1px;margin:0 5px 0 8px"><rect x="0.5" y="0.5" width="14" height="12" fill="#fff" stroke="#3c7bab" stroke-width="1"/><path d="M1 7.5L4.5 3.8L9.3 8.6L11.2 6.6L14 9V12H1Z" fill="#0b69a1"/><rect x="9.8" y="3" width="2.2" height="2.2" fill="#0b5a95"/></svg><span class="red">[热点]</span></div>
<div class="cell" style="left:882.3px;width:171.00px;top:877.73px;line-height:40px;font-size:15px;color:#333;">游戏辅助</div>
<div class="cell" style="left:1053.3px;width:170.90px;top:877.73px;line-height:40px;font-size:15px;color:#333;">热门推荐</div>
<div class="cell" style="left:1224.2px;width:84.40px;top:877.73px;line-height:40px;font-size:15px;color:#333;">3</div>
<div class="cell" style="left:1308.6px;width:170.80px;top:877.73px;line-height:40px;font-size:15px;color:#333;letter-spacing:0.3px">yzmcms</div>
<div class="cell" style="left:1479.4px;width:189.20px;top:877.73px;line-height:40px;font-size:15px;color:#333;letter-spacing:0.45px">2019-10-16 16:23:43</div>
<div class="badge" style="left:1691px;top:887.7px"></div>
<div class="cell" style="left:1691px;width:39.00px;top:878.23px;line-height:40px;font-size:15px;color:#fff;font-weight:bold">正常</div>
<div class="obtn" style="left:1772px;top:880.2px"></div>
<div class="cell" style="left:1772px;width:82.00px;top:877.73px;line-height:40px;font-size:15px;color:#fff;">移出专题</div>
<svg class="cb" style="left:292px;top:942px" width="16" height="16" viewBox="0 0 16 16"><rect x="0.7" y="0.7" width="14.6" height="14.6" fill="#fff" stroke="#333" stroke-width="1.4"/></svg>
<div class="t" style="left:337px;top:931.18px;line-height:40px;font-size:15px;color:#333;">自走棋手游辅助<svg width="15" height="13" viewBox="0 0 15 13" style="vertical-align:-1px;margin:0 5px 0 8px"><rect x="0.5" y="0.5" width="14" height="12" fill="#fff" stroke="#3c7bab" stroke-width="1"/><path d="M1 7.5L4.5 3.8L9.3 8.6L11.2 6.6L14 9V12H1Z" fill="#0b69a1"/><rect x="9.8" y="3" width="2.2" height="2.2" fill="#0b5a95"/></svg><span class="red">[热点]</span></div>
<div class="cell" style="left:882.3px;width:171.00px;top:931.18px;line-height:40px;font-size:15px;color:#333;">游戏辅助</div>
<div class="cell" style="left:1053.3px;width:170.90px;top:931.18px;line-height:40px;font-size:15px;color:#333;">热门推荐</div>
<div class="cell" style="left:1224.2px;width:84.40px;top:931.18px;line-height:40px;font-size:15px;color:#333;">0</div>
<div class="cell" style="left:1308.6px;width:170.80px;top:931.18px;line-height:40px;font-size:15px;color:#333;letter-spacing:0.3px">yzmcms</div>
<div class="cell" style="left:1479.4px;width:189.20px;top:931.18px;line-height:40px;font-size:15px;color:#333;letter-spacing:0.45px">2019-10-16 16:20:35</div>
<div class="badge" style="left:1691px;top:941.2px"></div>
<div class="cell" style="left:1691px;width:39.00px;top:931.68px;line-height:40px;font-size:15px;color:#fff;font-weight:bold">正常</div>
<div class="obtn" style="left:1772px;top:933.7px"></div>
<div class="cell" style="left:1772px;width:82.00px;top:931.18px;line-height:40px;font-size:15px;color:#fff;">移出专题</div>
<svg class="cb" style="left:292px;top:995px" width="16" height="16" viewBox="0 0 16 16"><rect x="0.7" y="0.7" width="14.6" height="14.6" fill="#fff" stroke="#333" stroke-width="1.4"/></svg>
<div class="t" style="left:337px;top:984.63px;line-height:40px;font-size:15px;color:#333;"><span style="letter-spacing:0.25px">D</span><span style="letter-spacing:0.45px">irect</span><span style="letter-spacing:0.25px">X</span><span style="letter-spacing:0.1px"> </span><span style="letter-spacing:0.45px">12</span><span style="letter-spacing:0.1px"> </span><span style="letter-spacing:0.25px">W</span><span style="letter-spacing:0.45px">in7</span>版<svg width="15" height="13" viewBox="0 0 15 13" style="vertical-align:-1px;margin:0 5px 0 8px"><rect x="0.5" y="0.5" width="14" height="12" fill="#fff" stroke="#3c7bab" stroke-width="1"/><path d="M1 7.5L4.5 3.8L9.3 8.6L11.2 6.6L14 9V12H1Z" fill="#0b69a1"/><rect x="9.8" y="3" width="2.2" height="2.2" fill="#0b5a95"/></svg><span class="red">[热点]</span></div>
<div class="cell" style="left:882.3px;width:171.00px;top:984.63px;line-height:40px;font-size:15px;color:#333;">游戏辅助</div>
<div class="cell" style="left:1053.3px;width:170.90px;top:984.63px;line-height:40px;font-size:15px;color:#333;">热门推荐</div>
<div class="cell" style="left:1224.2px;width:84.40px;top:984.63px;line-height:40px;font-size:15px;color:#333;">0</div>
<div class="cell" style="left:1308.6px;width:170.80px;top:984.63px;line-height:40px;font-size:15px;color:#333;letter-spacing:0.3px">yzmcms</div>
<div class="cell" style="left:1479.4px;width:189.20px;top:984.63px;line-height:40px;font-size:15px;color:#333;letter-spacing:0.45px">2019-10-16 16:19:16</div>
<div class="badge" style="left:1691px;top:994.6px"></div>
<div class="cell" style="left:1691px;width:39.00px;top:985.13px;line-height:40px;font-size:15px;color:#fff;font-weight:bold">正常</div>
<div class="obtn" style="left:1772px;top:987.1px"></div>
<div class="cell" style="left:1772px;width:82.00px;top:984.63px;line-height:40px;font-size:15px;color:#fff;">移出专题</div>
<div class="abs" style="left:469px;top:204px;width:111px;height:170px;background:#fff;border:1px solid #a0a0a0"></div>
<div class="abs" style="left:470px;top:205px;width:109px;height:34px;background:#0078d7"></div>
<div class="t" style="left:477px;top:203.20px;line-height:40px;font-size:18px;color:#fff;">专题分类</div>
<div class="t" style="left:477px;top:236.90px;line-height:40px;font-size:18px;color:#222;">近期大作</div>
<div class="t" style="left:477px;top:270.60px;line-height:40px;font-size:18px;color:#222;">热门推荐</div>
<div class="t" style="left:477px;top:304.30px;line-height:40px;font-size:18px;color:#222;">专题系列</div>
<div class="t" style="left:477px;top:338.00px;line-height:40px;font-size:18px;color:#222;">最新专题</div>
<svg class="abs" style="left:1680px;top:980px" width="217" height="36" viewBox="0 0 217 36"><g transform="translate(7 25) scale(1.1 1)" font-family="Liberation Sans" font-size="22"><text x="0" y="0" fill="#fff" stroke="#fff" stroke-width="2.6" stroke-linejoin="round" opacity="0.9">www.yzmcms.com</text><text x="0" y="0" fill="#0a2a60" stroke="#0a2a60" stroke-width="0.35">www.yzmcms.com</text></g></svg>
</body></html>
